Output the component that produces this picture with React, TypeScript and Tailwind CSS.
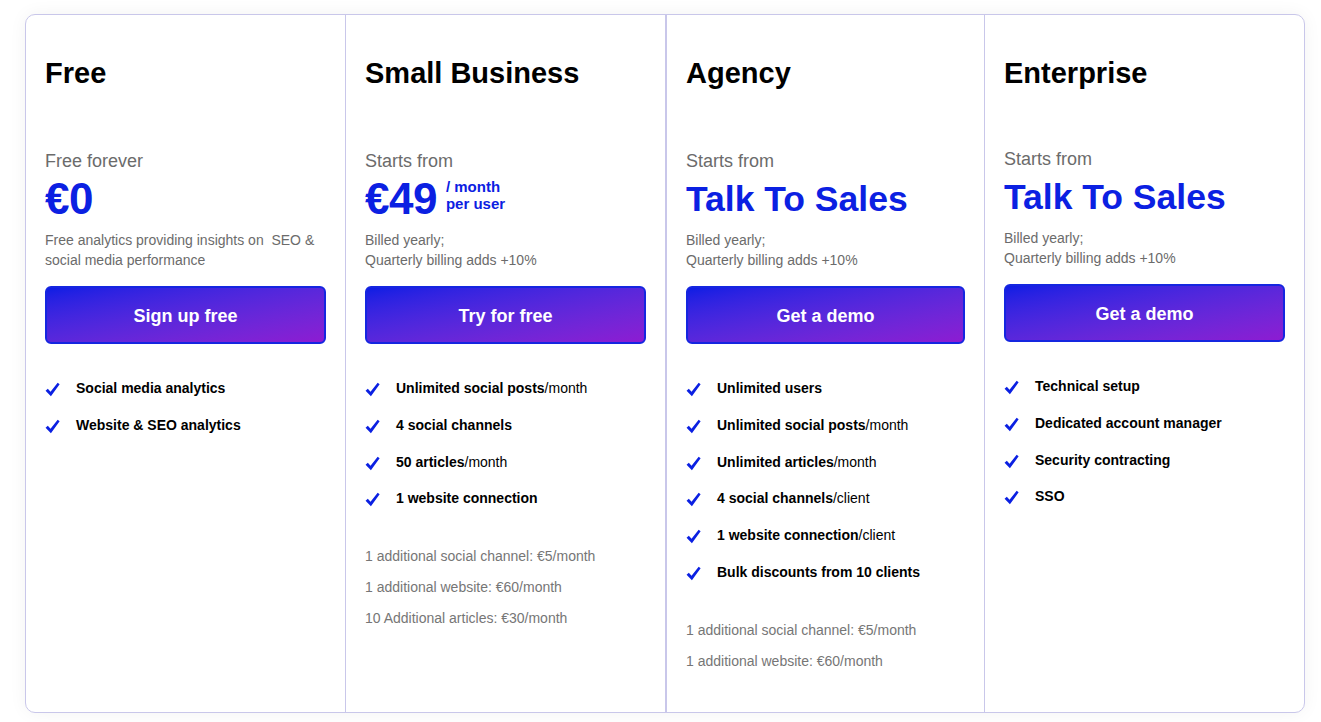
import { FC, ReactNode } from "react"

type Feature = { bold: string; rest?: string }

type Plan = {
  name: string
  label: string
  price: ReactNode
  note: ReactNode
  cta: string
  features: Feature[]
  extras?: string[]
  shift?: boolean
  border: string
}

const Check: FC = () => (
  <svg viewBox="0 0 16 15" className="w-[15px] h-[15px] mt-[4px] shrink-0" fill="#0b20e2">
    <path d="M0.6 8.7 L3 6.7 L5.9 10 L13.5 0.4 L15.6 2 L6.3 14.6 Z" />
  </svg>
)

const BILLING = (
  <>
    Billed yearly;
    <br />
    Quarterly billing adds +10%
  </>
)

const PLANS: Plan[] = [
  {
    name: "Free",
    label: "Free forever",
    price: <span className="text-[44px] leading-[48px] font-bold tracking-[-0.5px]">€0</span>,
    note: <>Free analytics providing insights on&nbsp; SEO &amp; social media performance</>,
    cta: "Sign up free",
    features: [{ bold: "Social media analytics" }, { bold: "Website & SEO analytics" }],
    border: "",
  },
  {
    name: "Small Business",
    label: "Starts from",
    price: (
      <div className="flex items-start">
        <span className="text-[44px] leading-[48px] font-bold tracking-[-0.5px]">€49</span>
        <span className="ml-[9px] mt-[3px] text-[15px] leading-[17px] font-bold">
          / month
          <br />
          per user
        </span>
      </div>
    ),
    note: BILLING,
    cta: "Try for free",
    features: [
      { bold: "Unlimited social posts", rest: "/month" },
      { bold: "4 social channels" },
      { bold: "50 articles", rest: "/month" },
      { bold: "1 website connection" },
    ],
    extras: [
      "1 additional social channel: €5/month",
      "1 additional website: €60/month",
      "10 Additional articles: €30/month",
    ],
    border: "border-l",
  },
  {
    name: "Agency",
    label: "Starts from",
    price: <span className="text-[35.5px] leading-[48px] font-bold">Talk To Sales</span>,
    note: BILLING,
    cta: "Get a demo",
    features: [
      { bold: "Unlimited users" },
      { bold: "Unlimited social posts", rest: "/month" },
      { bold: "Unlimited articles", rest: "/month" },
      { bold: "4 social channels", rest: "/client" },
      { bold: "1 website connection", rest: "/client" },
      { bold: "Bulk discounts from 10 clients" },
    ],
    extras: ["1 additional social channel: €5/month", "1 additional website: €60/month"],
    border: "border-l-2",
  },
  {
    name: "Enterprise",
    label: "Starts from",
    price: <span className="text-[35.5px] leading-[48px] font-bold">Talk To Sales</span>,
    note: BILLING,
    cta: "Get a demo",
    features: [
      { bold: "Technical setup" },
      { bold: "Dedicated account manager" },
      { bold: "Security contracting" },
      { bold: "SSO" },
    ],
    shift: true,
    border: "border-l",
  },
]

const PlanColumn: FC<{ plan: Plan }> = ({ plan }) => (
  <div className={`flex flex-col pt-[40px] px-[19px] border-[#c9c7ea] ${plan.border}`}>
    <h2 className="text-[29px] leading-[36px] font-bold text-black">{plan.name}</h2>
    <div className={`${plan.shift ? "mt-[56px]" : "mt-[58px]"} text-[18px] leading-[24px] text-[#6b6b6b]`}>
      {plan.label}
    </div>
    <div className="mt-[2px] text-[#0b20e2]">{plan.price}</div>
    <p className="mt-[7px] text-[14px] leading-[20px] text-[#6b6b6b]">{plan.note}</p>
    <button className="mt-[16px] h-[58px] w-full pt-[3px] rounded-md border-2 border-[#1526e0] bg-linear-to-br from-[#0a1de4] to-[#8d1bd2] text-white text-[18px] font-semibold">
      {plan.cta}
    </button>
    <ul className="mt-[34px] flex flex-col gap-[16.8px]">
      {plan.features.map((f) => (
        <li key={f.bold} className="flex items-start gap-4">
          <Check />
          <span className="text-[14px] leading-[20px] text-black">
            <span className="font-bold">{f.bold}</span>
            {f.rest}
          </span>
        </li>
      ))}
    </ul>
    {plan.extras && (
      <div className="mt-[38px] flex flex-col gap-[11px]">
        {plan.extras.map((e) => (
          <div key={e} className="text-[14px] leading-[20px] text-[#767676]">
            {e}
          </div>
        ))}
      </div>
    )}
  </div>
)

export default function App() {
  return (
    <div className="min-h-[722px] bg-white pt-[14px] pl-[25px] font-['Liberation_Sans',Arial,sans-serif]">
      <div className="grid grid-cols-[319px_320px_319px_320px] w-[1280px] h-[699px] rounded-[10px] border border-[#c9c7ea] bg-white shadow-[0_0_18px_rgba(0,0,0,0.05)] overflow-hidden">
        {PLANS.map((p) => (
          <PlanColumn key={p.name} plan={p} />
        ))}
      </div>
    </div>
  )
}
